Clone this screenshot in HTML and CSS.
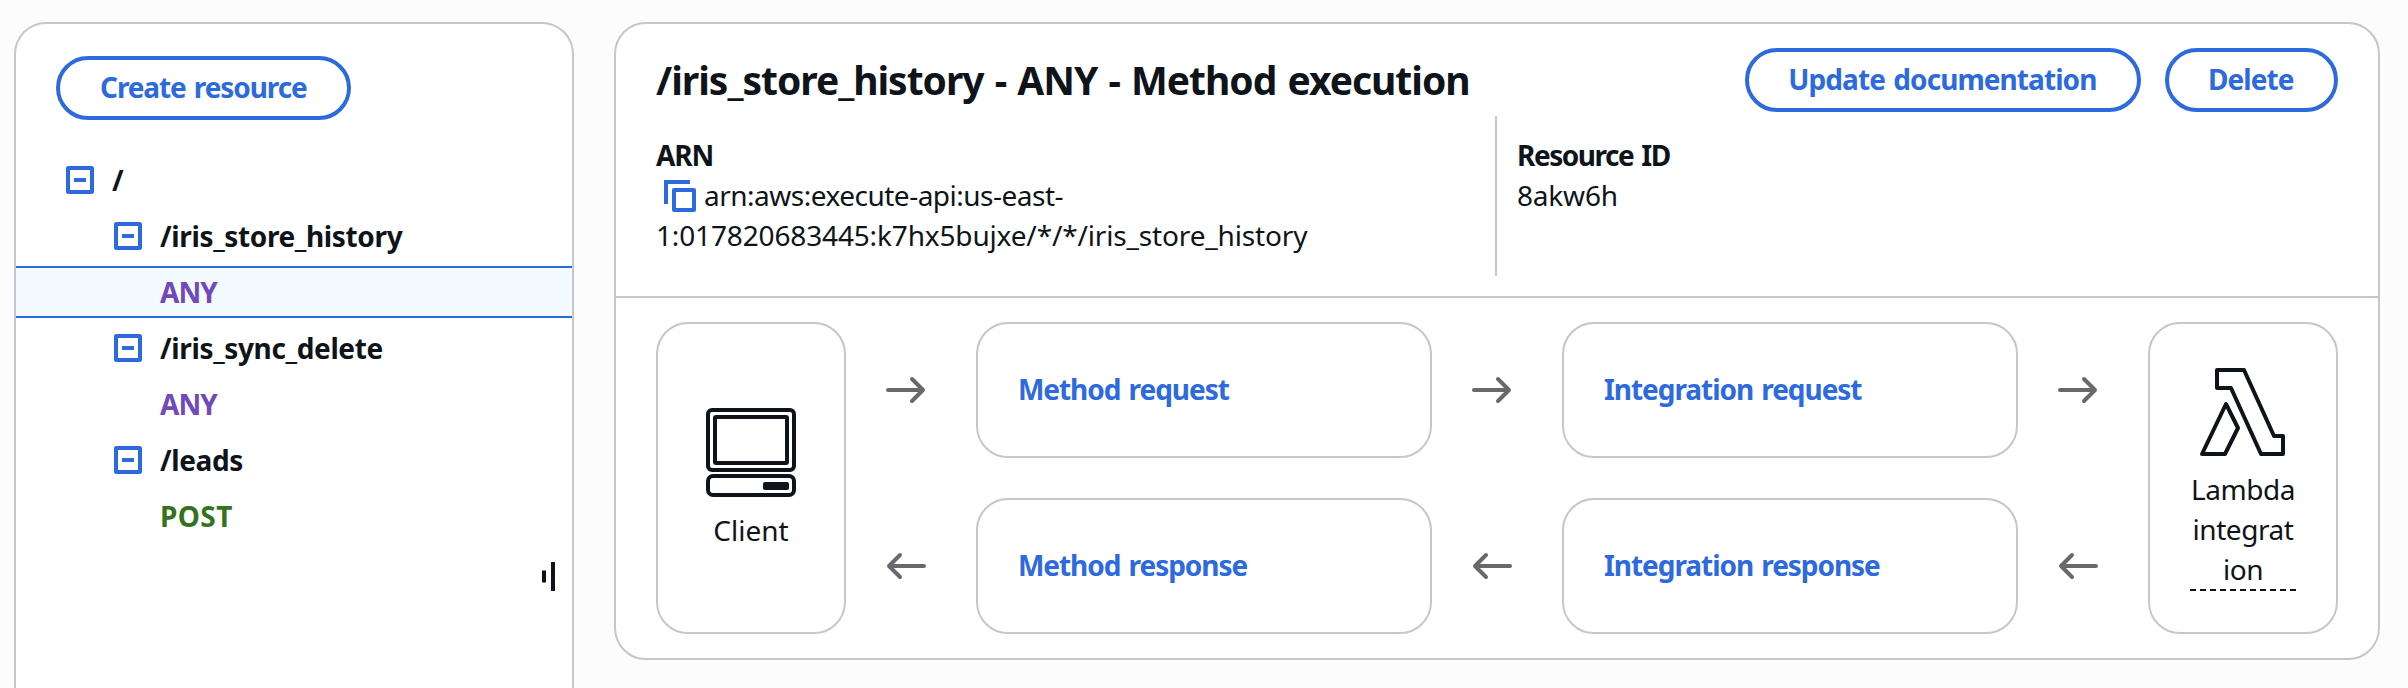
FILE: index.html
```html
<!DOCTYPE html>
<html lang="en">
<head>
<meta charset="utf-8">
<title>Resources</title>
<link rel="stylesheet" href="styles.css">
</head>
<body>
<svg class="defs" aria-hidden="true">
  <symbol id="minus-box" viewBox="0 0 28 28"><rect x="2" y="2" width="24" height="24" rx=".5" fill="none" stroke="currentColor" stroke-width="4" stroke-linejoin="round"/><path d="M8 14h12" stroke="currentColor" stroke-width="4"/></symbol>
  <symbol id="arrow" viewBox="0 0 40 28"><path d="M2 14h35M26 3l11 11-11 11" fill="none" stroke="currentColor" stroke-width="4" stroke-linecap="round" stroke-linejoin="round"/></symbol>
</svg>
<div class="layout">
  <aside class="sidebar">
    <button class="btn create">Create resource</button>
    <div class="tree">
      <div class="node root"><svg class="toggle"><use href="#minus-box"/></svg><span>/</span></div>
      <div class="node child"><svg class="toggle"><use href="#minus-box"/></svg><span>/iris_store_history</span></div>
      <div class="node method any selected"><span>ANY</span></div>
      <div class="node child"><svg class="toggle"><use href="#minus-box"/></svg><span>/iris_sync_delete</span></div>
      <div class="node method any"><span>ANY</span></div>
      <div class="node child"><svg class="toggle"><use href="#minus-box"/></svg><span>/leads</span></div>
      <div class="node method post"><span>POST</span></div>
    </div>
    <svg class="handle" viewBox="0 0 14 30"><path d="M2 9.500v12M11 1v29" stroke="currentColor" stroke-width="4"/></svg>
  </aside>
  <main class="panel">
    <header class="head">
      <h1>/iris_store_history - ANY - Method execution</h1>
      <div class="actions">
        <button class="btn">Update documentation</button>
        <button class="btn">Delete</button>
      </div>
    </header>
    <div class="details">
      <div class="detail">
        <div class="label arn-label">ARN</div>
        <div class="arn"><svg class="copy" viewBox="0 0 32 32"><path d="M2 24V2h24" fill="none" stroke="currentColor" stroke-width="4"/><rect x="10" y="10" width="20" height="20" fill="none" stroke="currentColor" stroke-width="4" stroke-linejoin="round"/></svg><span class="arn-head">arn:aws:execute-api:us-east-</span><br><span class="arn-tail">1:017820683445:k7hx5bujxe/*/*/iris_store_history</span></div>
      </div>
      <div class="detail second">
        <div class="label">Resource ID</div>
        <div class="value">8akw6h</div>
      </div>
    </div>
    <section class="flow">
      <div class="card end">
        <svg class="end-icon" viewBox="0 0 90 90" fill="none" stroke="currentColor" stroke-width="4"><rect x="2" y="2" width="86" height="60" rx="4"/><rect x="9" y="9" width="72" height="46" rx="1"/><rect x="2" y="68" width="86" height="19" rx="5"/><rect x="57" y="74" width="26" height="8" rx="2" fill="currentColor" stroke="none"/></svg>
        <span>Client</span>
      </div>
      <div class="arrows"><svg class="arrow"><use href="#arrow"/></svg><svg class="arrow back"><use href="#arrow"/></svg></div>
      <div class="steps"><a class="card step">Method request</a><a class="card step">Method response</a></div>
      <div class="arrows"><svg class="arrow"><use href="#arrow"/></svg><svg class="arrow back"><use href="#arrow"/></svg></div>
      <div class="steps"><a class="card step">Integration request</a><a class="card step">Integration response</a></div>
      <div class="arrows"><svg class="arrow"><use href="#arrow"/></svg><svg class="arrow back"><use href="#arrow"/></svg></div>
      <div class="card end">
        <svg class="end-icon" viewBox="0 0 90 90" fill="none" stroke="currentColor" stroke-width="4" stroke-linejoin="round"><path d="M19 3h27l30 66h9v18H63L33 21H19zM28 37 40 61 27 87H4z"/></svg>
        <span class="lambda">Lambda<br>integrat<br>ion</span>
      </div>
    </section>
  </main>
</div>
</body>
</html>
```
FILE: styles.css
```css
* { box-sizing: border-box; }
body { margin: 0; height: 688px; overflow: hidden; background: #fcfcfd; color: #0f141a; font-family: "Noto Sans", sans-serif; font-size: 28px; line-height: 40px; }
.defs { display: none; }
svg { display: block; flex: none; }
.layout { display: flex; align-items: flex-start; gap: 40px; padding: 22px 28px 0 14px; }
.sidebar { position: relative; width: 560px; height: 666px; background: #fff; border: 2px solid #c6c6cd; border-bottom: 0; border-radius: 32px 32px 0 0; padding-top: 32px; }
.btn { display: block; height: 64px; padding: 0 40.5px 2px 39px; border: 4px solid #2c6ade; border-radius: 32px; background: #fff; color: #2c6ade; font: inherit; font-weight: 700; letter-spacing: -.93px; word-spacing: 2px; white-space: nowrap; }
.create { margin-left: 40px; padding: 0 40px 2px; letter-spacing: -1.1px; }
.tree { margin-top: 34px; display: flex; flex-direction: column; gap: 4px; font-weight: 700; letter-spacing: -.36px; }
.node { height: 52px; display: flex; align-items: center; gap: 18px; border: solid transparent; border-width: 2px 0; }
.root { padding-left: 50px; }
.child { padding-left: 98px; }
.method { padding-left: 144px; }
.any { color: #7049bb; letter-spacing: -.9px; }
.post { color: #35721d; letter-spacing: .4px; }
.selected { background: #f3fbff; border-color: #2c6ade; }
.toggle { width: 28px; height: 28px; color: #2c6ade; }
.handle { position: absolute; left: 526px; top: 537px; width: 14px; height: 30px; }
.panel { flex: 1; height: 638px; background: #fff; border: 2px solid #c6c6cd; border-radius: 32px; }
.head { display: flex; justify-content: space-between; padding: 24px 40px 0; height: 92px; }
h1 { margin: 8px 0 0; font-size: 39px; line-height: 48px; letter-spacing: -1.02px; word-spacing: 2px; white-space: nowrap; }
.actions { display: flex; gap: 24px; }
.details { display: flex; height: 182px; border-bottom: 2px solid #c6c6cd; padding-left: 40px; }
.detail { width: 839px; padding-top: 19px; }
.second { height: 160px; width: auto; border-left: 2px solid #c6c6cd; padding-left: 20px; }
.label { font-weight: 700; letter-spacing: -1.45px; word-spacing: 2px; }
.arn-label { letter-spacing: -1.1px; }
.value { letter-spacing: -.2px; }
.arn { white-space: nowrap; }
.arn-head { letter-spacing: -.5px; }
.arn-tail { letter-spacing: -.15px; }
.copy { display: inline-block; width: 32px; height: 32px; margin: 0 8px 0 8px; vertical-align: -6px; color: #2c6ade; }
.flow { display: flex; padding: 24px 40px; }
.card { border: 2px solid #c6c6cd; border-radius: 32px; background: #fff; }
.end { width: 190px; height: 312px; display: flex; flex-direction: column; align-items: center; justify-content: center; text-align: center; gap: 12px; padding-top: 2px; }
.end-icon { width: 90px; height: 90px; }
.arrows { width: 130px; height: 312px; display: flex; flex-direction: column; justify-content: space-between; align-items: flex-start; padding: 54px 0 54px 40px; color: #67696c; }
.arrow { width: 40px; height: 28px; }
.back { transform: scaleX(-1); }
.steps { display: flex; flex-direction: column; gap: 40px; }
.step { width: 456px; height: 136px; display: flex; align-items: center; padding: 0 0 2px 40px; color: #2c6ade; font-weight: 700; letter-spacing: -1.05px; word-spacing: 2px; }
.lambda { border-bottom: 2px dashed #0f141a; width: 106px; letter-spacing: -.45px; }
```
